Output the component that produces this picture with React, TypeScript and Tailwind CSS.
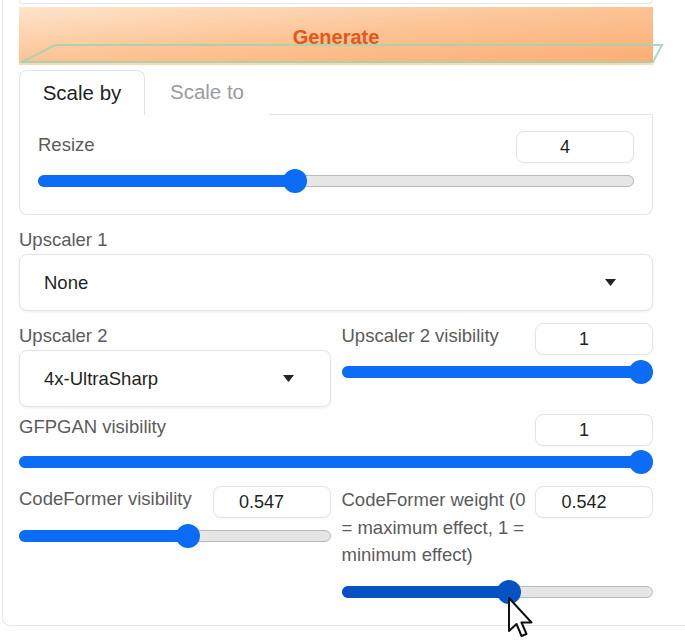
import React from 'react';

const font = { fontFamily: '"Liberation Sans", Arial, sans-serif' };

function NumberBox({ value }: { value: string }) {
  return (
    <div className="w-[118px] h-[32px] shrink-0 rounded-lg border border-[#e4e4e7] bg-white flex items-center justify-center pr-[20px] text-[18px] text-[#1f1f1f] shadow-[0_1px_2px_rgba(0,0,0,0.04)]">
      {value}
    </div>
  );
}

function Slider({ pct, dark = false }: { pct: number; dark?: boolean }) {
  const fill = dark ? 'bg-[#0652c5]' : 'bg-[#0b6cf5]';
  return (
    <div className="relative h-6 flex items-center">
      <div className="w-full h-[12px] rounded-full border border-[#b9b9b9] bg-[#e6e6e6]" />
      <div
        className={`absolute left-0 h-[12px] rounded-full ${fill}`}
        style={{ width: `calc(12px + (100% - 24px) * ${pct})` }}
      />
      <div
        className={`absolute w-6 h-6 rounded-full ${fill}`}
        style={{ left: `calc((100% - 24px) * ${pct})` }}
      />
    </div>
  );
}

function Dropdown({ value }: { value: string }) {
  return (
    <div className="h-[57px] rounded-lg border border-[#e4e4e7] bg-white shadow-[0_1px_3px_rgba(0,0,0,0.08)] flex items-center justify-between pl-6 pr-9 text-[18.5px] text-[#1f1f1f]">
      <span>{value}</span>
      <svg width="11" height="7" viewBox="0 0 11 7">
        <path d="M0 0 L11 0 L5.5 7 Z" fill="#222" />
      </svg>
    </div>
  );
}

function Label({ children }: { children: React.ReactNode }) {
  return <div className="text-[18.5px] leading-[24px] text-[#5b5b5b]">{children}</div>;
}

export default function App() {
  return (
    <div className="w-[685px] h-[643px] bg-white overflow-hidden relative" style={font}>
      <div className="ml-[2px] w-[720px] h-[626px] border-l border-b border-[#e6e6e6] rounded-bl-lg">
        <div className="ml-[16px] w-[634px]">
          <div className="h-[4px] border-b border-x border-[#e6e6e6] rounded-b-lg" />

          <button className="mt-[3px] w-full h-[58px] pt-[3px] bg-gradient-to-br from-[#fee4cb] via-[#fcc394] to-[#fbad72] border-b-2 border-[#fcd7b4] text-[20px] font-semibold text-[#e4571c] flex items-center justify-center">
            Generate
          </button>

          <div className="mt-[5px] flex items-end">
            <div className="w-[126px] h-[45px] rounded-t-lg border border-b-0 border-[#e4e4e7] bg-white flex items-center justify-center text-[20.5px] text-[#1f1f1f]">
              Scale by
            </div>
            <div className="w-[124px] h-[45px] flex items-center justify-center text-[20.5px] text-[#9a9aa3]">
              Scale to
            </div>
            <div className="flex-1 border-b border-[#e4e4e7]" />
          </div>
          <div className="border border-t-0 border-[#e4e4e7] rounded-b-lg px-[18px] pt-[16px] pb-[21px]">
            <div className="flex justify-between items-start">
              <div className="pt-[2px]"><Label>Resize</Label></div>
              <NumberBox value="4" />
            </div>
            <div className="mt-[6px]">
              <Slider pct={3 / 7} />
            </div>
          </div>

          <div className="mt-[13px]">
            <Label>Upscaler 1</Label>
            <div className="mt-[2px]">
              <Dropdown value="None" />
            </div>
          </div>

          <div className="mt-[12px] grid grid-cols-2 gap-x-[11px]">
            <div className="pt-[1px]">
              <Label>Upscaler 2</Label>
              <div className="mt-[2px] h-[58px]">
                <Dropdown value="4x-UltraSharp" />
              </div>
            </div>
            <div>
              <div className="flex justify-between items-start">
                <div className="pt-[1px]"><Label>Upscaler 2 visibility</Label></div>
                <NumberBox value="1" />
              </div>
              <div className="mt-[5px]">
                <Slider pct={1} />
              </div>
            </div>
          </div>

          <div className="mt-[6px]">
            <div className="flex justify-between items-start">
              <div className="pt-[1px]"><Label>GFPGAN visibility</Label></div>
              <NumberBox value="1" />
            </div>
            <div className="mt-[4px]">
              <Slider pct={1} />
            </div>
          </div>

          <div className="mt-[12px] grid grid-cols-2 gap-x-[11px]">
            <div>
              <div className="flex justify-between items-start">
                <div className="pt-[1px]"><Label>CodeFormer visibility</Label></div>
                <NumberBox value="0.547" />
              </div>
              <div className="mt-[6px]">
                <Slider pct={0.547} />
              </div>
            </div>
            <div>
              <div className="flex justify-between items-start">
                <div className="text-[18.5px] leading-[27.5px] text-[#5b5b5b] whitespace-nowrap">
                  CodeFormer weight (0
                  <br />= maximum effect, 1 =
                  <br />
                  minimum effect)
                </div>
                <NumberBox value="0.542" />
              </div>
              <div className="mt-[11px]">
                <Slider pct={0.542} dark />
              </div>
            </div>
          </div>
        </div>
      </div>

      {/* focus outline artifact over the Generate button */}
      <svg className="absolute left-0 top-0 pointer-events-none" width="685" height="80">
        <path d="M22 62 L55 45 L662 45 L653 62 Z" fill="none" stroke="#9fd4b4" strokeWidth="2" opacity="0.85" />
      </svg>

      {/* mouse pointer */}
      <svg className="absolute pointer-events-none" style={{ left: 508, top: 597 }} width="26" height="42" viewBox="0 0 26 42">
        <path d="M1 1 L1 34 L8.5 27 L13.5 39 L18.5 37 L13.5 25.5 L23.5 25.5 Z" fill="#fff" stroke="#111" strokeWidth="2" strokeLinejoin="round" />
      </svg>
    </div>
  );
}
